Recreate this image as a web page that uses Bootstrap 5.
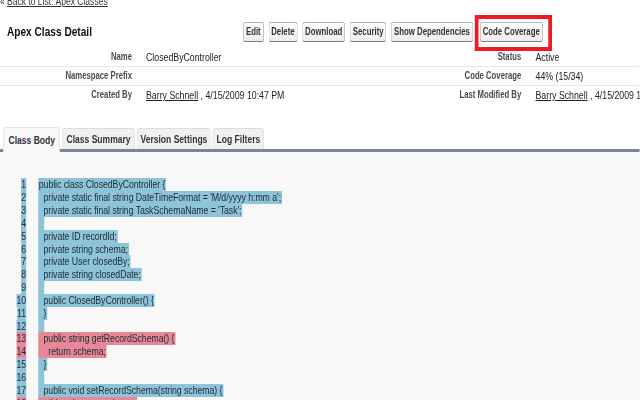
<!DOCTYPE html>
<html lang="en">
<head>
<meta charset="utf-8">
<link href="https://cdn.jsdelivr.net/npm/bootstrap@5.3.0/dist/css/bootstrap.min.css" rel="stylesheet">
<style>
html,body{height:400px;overflow:hidden;background:#fff}
body{font-family:"Liberation Sans",Arial,sans-serif;font-size:11.7px;color:#222;line-height:1.2}
.squeeze{width:853.33px;height:400px;transform:scaleX(.75);transform-origin:0 0;overflow:hidden}
.backline{height:8px;padding-left:0;line-height:8px;font-size:11.4px;color:#333;white-space:nowrap}
.backline .lnk{position:relative;top:-3px;text-decoration:underline}
.backline .chev{position:relative;top:-3px;margin-right:3px}
.headbar{height:40px;padding:14px 0 0 9.3px}
.ttl{font-weight:700;font-size:13.5px;color:#111;width:314.7px;padding-top:2px;line-height:16px;flex:none}
.sfbtn{height:20px;border:1px solid #b5b5b5;border-bottom-color:#7f7f7f;border-radius:3px;background:linear-gradient(#fff,#ededed);font-size:10.4px;font-weight:700;color:#333;padding:0 3px;line-height:18px;white-space:nowrap;margin:0;position:relative}
.btnrow{gap:6px}
.hilite{margin-left:3px}
.hilite::after{content:"";position:absolute;top:-8px;bottom:-10px;left:-8px;right:-13px;border:solid #ed1c24;border-width:4px 5.7px;pointer-events:none}
.drow{height:19px;border-bottom:1px solid #e8e8e8;align-items:center;white-space:nowrap}
.drow:last-child{border-bottom:0}
.lab{width:176px;text-align:right;font-weight:700;color:#4a4a56;font-size:10.3px;flex:none}
.val{width:268px;padding-left:18.7px;flex:none;color:#222}
.lab2{width:251px;text-align:right;font-weight:700;color:#4a4a56;font-size:10.3px;flex:none}
.val2{padding-left:19px;color:#222}
.tabsbar{height:24.7px;margin-top:22px;border-bottom:3px solid #7a8598;padding-left:4.4px;gap:2px;align-items:flex-end}
.tabx{height:20.7px;line-height:20px;text-align:center;font-weight:700;font-size:11.4px;color:#333;background:#f0f0f0;border:1px solid #dcdcdc;border-bottom:0;border-radius:4px 4px 0 0;white-space:nowrap;flex:none}
.tabx.on{height:24.7px;margin-bottom:-3px;background:#f8f8f8;line-height:24px;border-color:#e2e2e2;position:relative}
.wa{width:76px}.wb{width:98px}.wc{width:99px}.wd{width:69px}
.codepane{background:#f8f8f8;height:250px;padding-top:18.3px;font-size:11.66px;letter-spacing:-.07px;color:#1d2a35}
.numcol{width:42.7px;flex:none;padding-top:8.3px}
.codcol{flex:1;border-left:1.3px solid #fff;padding:8.3px 0 0 7px}
.cline{height:12.85px;line-height:12.85px;white-space:pre}
.numcol .cline{text-align:right;padding-right:8px}
.mk{display:inline-block;height:12.85px;background:#8dc4d9;padding:0 1px}
.cline.red .mk{background:#e78898}
.mk.digit{padding:0}
</style>
<script src="https://cdn.jsdelivr.net/npm/bootstrap@5.3.0/dist/js/bootstrap.bundle.min.js"></script>
</head>
<body>
<div class="squeeze">
<div class="backline"><span class="chev">«</span><span class="lnk">Back to List: Apex Classes</span></div>
<div class="headbar d-flex">
  <div class="ttl">Apex Class Detail</div>
  <div class="d-flex btnrow">
    <button class="sfbtn" type="button">Edit</button>
    <button class="sfbtn" type="button">Delete</button>
    <button class="sfbtn" type="button">Download</button>
    <button class="sfbtn" type="button">Security</button>
    <button class="sfbtn" type="button">Show Dependencies</button>
    <button class="sfbtn hilite" type="button">Code Coverage</button>
  </div>
</div>
<div>
  <div class="drow d-flex"><div class="lab">Name</div><div class="val">ClosedByController</div><div class="lab2">Status</div><div class="val2">Active</div></div>
  <div class="drow d-flex"><div class="lab">Namespace Prefix</div><div class="val"></div><div class="lab2">Code Coverage</div><div class="val2">44% (15/34)</div></div>
  <div class="drow d-flex"><div class="lab">Created By</div><div class="val"><u>Barry Schnell</u> , 4/15/2009 10:47 PM</div><div class="lab2">Last Modified By</div><div class="val2"><u>Barry Schnell</u> , 4/15/2009 10:47 PM</div></div>
</div>
<div class="tabsbar d-flex">
  <div class="tabx on wa">Class Body</div>
  <div class="tabx wb">Class Summary</div>
  <div class="tabx wc">Version Settings</div>
  <div class="tabx wd">Log Filters</div>
</div>
<div class="codepane d-flex">
  <div class="numcol" id="nums"></div>
  <div class="codcol" id="cods"></div>
</div>
</div>
<script>
var L=[["public class ClosedByController {",0],["  private static final string DateTimeFormat = 'M/d/yyyy h:mm a';",0],["  private static final string TaskSchemaName = 'Task';",0],["  ",0],["  private ID recordId;",0],["  private string schema;",0],["  private User closedBy;",0],["  private string closedDate;",0],["  ",0],["  public ClosedByController() {",0],["  }",0],["  ",0],["  public string getRecordSchema() {",1],["    return schema;",1],["  }",0],["  ",0],["  public void setRecordSchema(string schema) {",0],["    this.schema = schema;",1]];
var a="",b="";
L.forEach(function(r,i){var c=r[1]?' red':'';
a+='<div class="cline'+c+'"><span class="mk digit">'+(i+1)+'</span></div>';
b+='<div class="cline'+c+'"><span class="mk">'+r[0]+'</span></div>';});
document.getElementById("nums").innerHTML=a;
document.getElementById("cods").innerHTML=b;
</script>
</body>
</html>
